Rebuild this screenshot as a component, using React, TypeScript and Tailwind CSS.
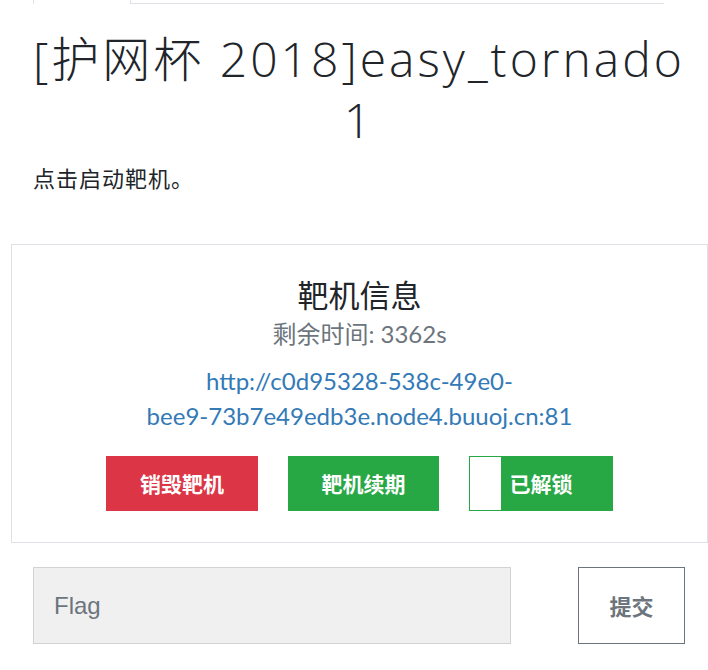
import React from 'react';

const cjk = '"Noto Sans CJK SC", sans-serif';

function Tabs() {
  return (
    <div className="flex h-[4px] pl-[33px] pr-[44px]">
      <div className="w-[98px] border-x border-[#dee2e6]"></div>
      <div className="flex-1 border-b border-[#dee2e6]"></div>
    </div>
  );
}

function MachineCard() {
  return (
    <div className="w-[697px] border border-[#dee2e6] flex flex-col items-center pt-[30px] pb-[31px] font-['Lato','Noto_Sans_CJK_SC',sans-serif]">
      <h4 className="text-[31px] leading-[40px] text-[#212529]">靶机信息</h4>
      <div className="text-[24px] leading-[32px] text-[#6c757d] mt-[3px]">剩余时间: 3362s</div>
      <a className="text-[24px] leading-[35px] text-[#337ab7] text-center mt-[13px]">
        http://c0d95328-538c-49e0-<br />bee9-73b7e49edb3e.node4.buuoj.cn:81
      </a>
      <div className="flex gap-[30px] mt-[23px]" style={{ fontFamily: cjk }}>
        <button className="w-[152px] h-[55px] bg-[#dc3545] text-white text-[21px] font-bold">销毁靶机</button>
        <button className="w-[151px] h-[55px] bg-[#28a745] text-white text-[21px] font-bold">靶机续期</button>
        <button className="relative w-[144px] h-[55px] bg-[#28a745] border border-[#28a745] text-white text-[21px] font-bold">
          <span className="absolute left-0 top-0 w-[31px] h-full bg-white"></span>
          <span className="relative">已解锁</span>
        </button>
      </div>
    </div>
  );
}

export default function App() {
  return (
    <div className="w-[708px] h-[670px] bg-white overflow-hidden">
      <Tabs />
      <div className="pl-[33px] pr-[23px] pt-[24px]">
        <h1 className="text-center text-[#212529] text-[48px] leading-[61px] tracking-[3px] whitespace-nowrap font-['Open_Sans','Noto_Sans_CJK_SC',sans-serif] font-light">
          [护网杯 2018]easy_tornado<br />1
        </h1>
        <p className="mt-[11px] text-[22px] leading-[32px] tracking-[1px] text-[#212529]" style={{ fontFamily: cjk }}>点击启动靶机。</p>
      </div>
      <div className="pl-[11px] mt-[51px]">
        <MachineCard />
      </div>
      <div className="flex items-center justify-between pl-[33px] pr-[23px] mt-[24px]">
        <input
          placeholder="Flag"
          className="w-[478px] h-[77px] bg-[#f0f0f0] border border-[#d3d3d3] px-[20px] text-[24px] font-['Liberation_Sans',sans-serif] placeholder-[#6c757d] outline-none"
        />
        <button className="w-[107px] h-[77px] border border-[#6c757d] bg-white text-[#6c757d] text-[22px] font-bold" style={{ fontFamily: cjk }}>
          提交
        </button>
      </div>
    </div>
  );
}
